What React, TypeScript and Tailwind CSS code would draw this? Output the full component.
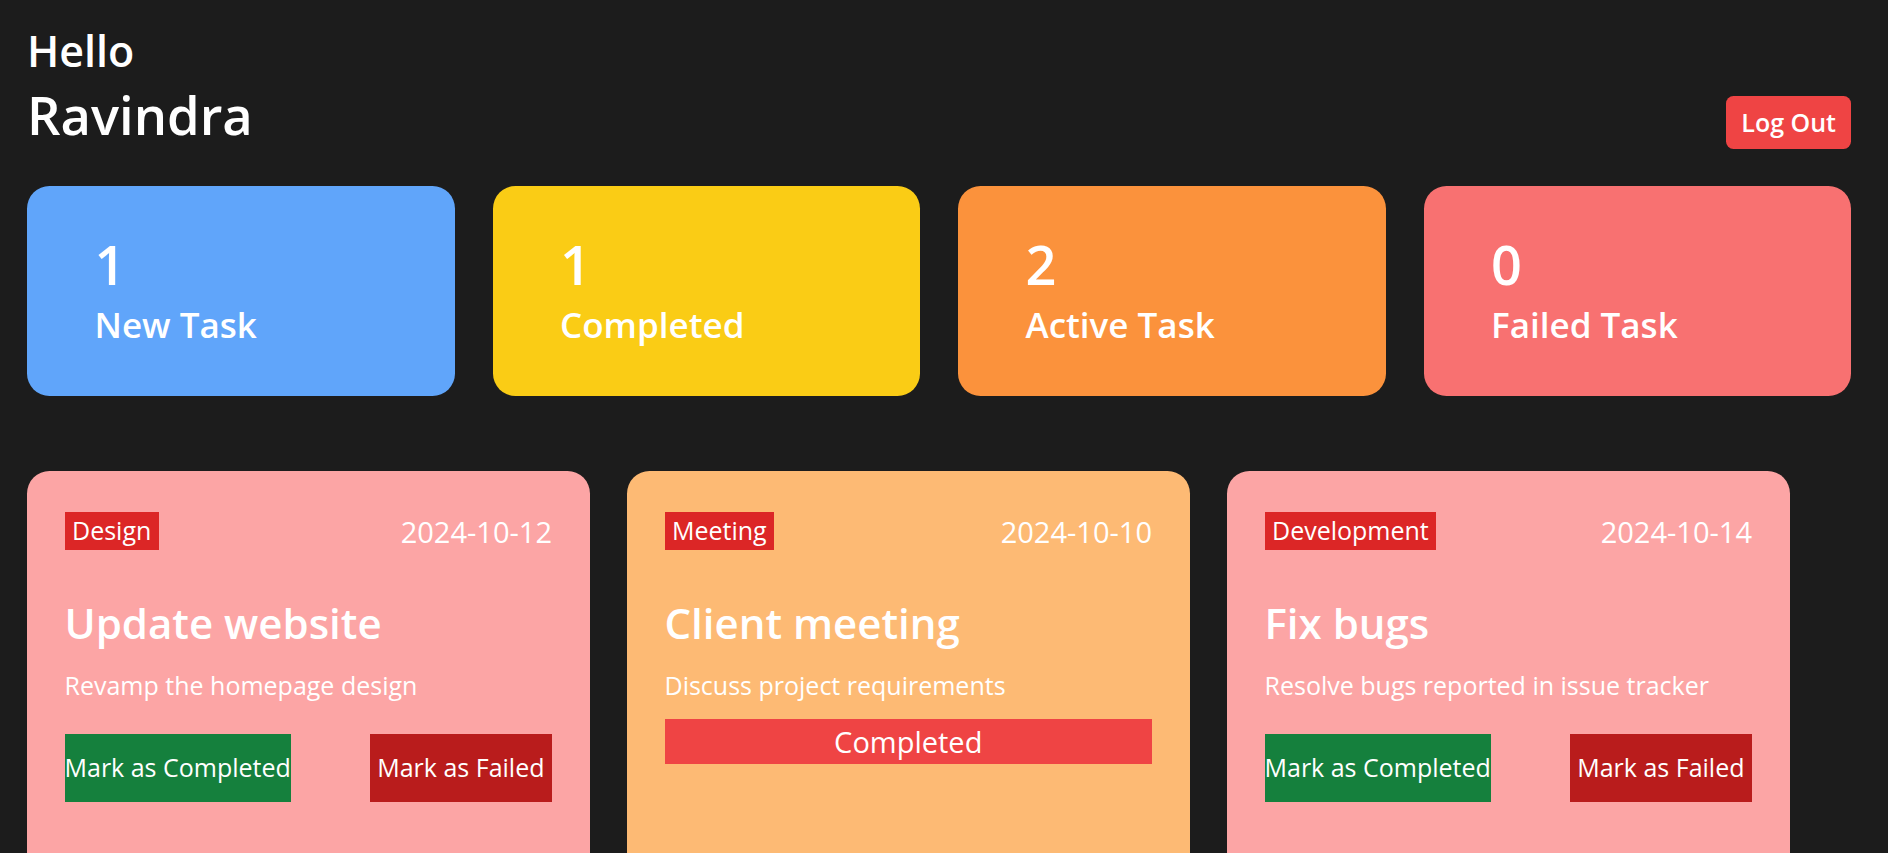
import React from "react";

type Task = {
  category: string;
  date: string;
  title: string;
  desc: string;
  bg: string;
  completed?: boolean;
};

const tasks: Task[] = [
  {
    category: "Design",
    date: "2024-10-12",
    title: "Update website",
    desc: "Revamp the homepage design",
    bg: "bg-[#fca5a5]",
  },
  {
    category: "Meeting",
    date: "2024-10-10",
    title: "Client meeting",
    desc: "Discuss project requirements",
    bg: "bg-[#fdba74]",
    completed: true,
  },
  {
    category: "Development",
    date: "2024-10-14",
    title: "Fix bugs",
    desc: "Resolve bugs reported in issue tracker",
    bg: "bg-[#fca5a5]",
  },
];

const stats = [
  { n: 1, label: "New Task", bg: "bg-[#60a5fa]" },
  { n: 1, label: "Completed", bg: "bg-[#facc15]" },
  { n: 2, label: "Active Task", bg: "bg-[#fb923c]" },
  { n: 0, label: "Failed Task", bg: "bg-[#f87171]" },
];

export default function App() {
  return (
    <div className="min-h-screen overflow-hidden bg-[#1c1c1c] pl-[27px] pr-[37px] pt-[21px] text-white font-['Open_Sans',sans-serif]">
      <div className="flex items-end justify-between">
        <div>
          <h1 className="text-[43px] leading-[60px] font-semibold">Hello</h1>
          <h2 className="text-[52.5px] leading-[67.5px] font-semibold">Ravindra</h2>
        </div>
        <button className="rounded-[7.5px] bg-[#ef4444] px-[15px] py-[7.5px] text-[25px] leading-[37.5px] font-semibold text-white">
          Log Out
        </button>
      </div>

      <div className="mt-[37.5px] grid grid-cols-4 gap-[38px]">
        {stats.map((s) => (
          <div key={s.label} className={`${s.bg} rounded-[22.5px] px-[67.5px] py-[45px]`}>
            <h2 className="text-[54px] leading-[67.5px] font-semibold">{s.n}</h2>
            <h3 className="text-[35px] leading-[52.5px] font-semibold">{s.label}</h3>
          </div>
        ))}
      </div>

      <div className="mt-[75px] flex gap-[37.5px]">
        {tasks.map((t) => (
          <div key={t.title} className={`${t.bg} h-[600px] w-[562.5px] shrink-0 rounded-[22.5px] p-[37.5px]`}>
            <div className="flex items-center justify-between">
              <span className="bg-[#dc2626] px-[7.5px] text-[25px] leading-[37.5px]">{t.category}</span>
              <span className="text-[29px] leading-[45px]">{t.date}</span>
            </div>
            <h2 className="mt-[39px] text-[42px] leading-[60px] font-semibold">{t.title}</h2>
            <p className="mt-[14px] text-[25px] leading-[37.5px]">{t.desc}</p>
            {t.completed ? (
              <div className="mt-[15px] w-full bg-[#ef4444] text-center text-[29px] leading-[45px]">Completed</div>
            ) : (
              <div className="mt-[30px] flex justify-between">
                <button className="w-[226px] bg-[#15803d] py-[15px] text-center text-[25px] leading-[37.5px] whitespace-nowrap">
                  Mark as Completed
                </button>
                <button className="bg-[#b91c1c] px-[7.5px] py-[15px] text-[25px] leading-[37.5px] whitespace-nowrap">
                  Mark as Failed
                </button>
              </div>
            )}
          </div>
        ))}
      </div>
    </div>
  );
}
